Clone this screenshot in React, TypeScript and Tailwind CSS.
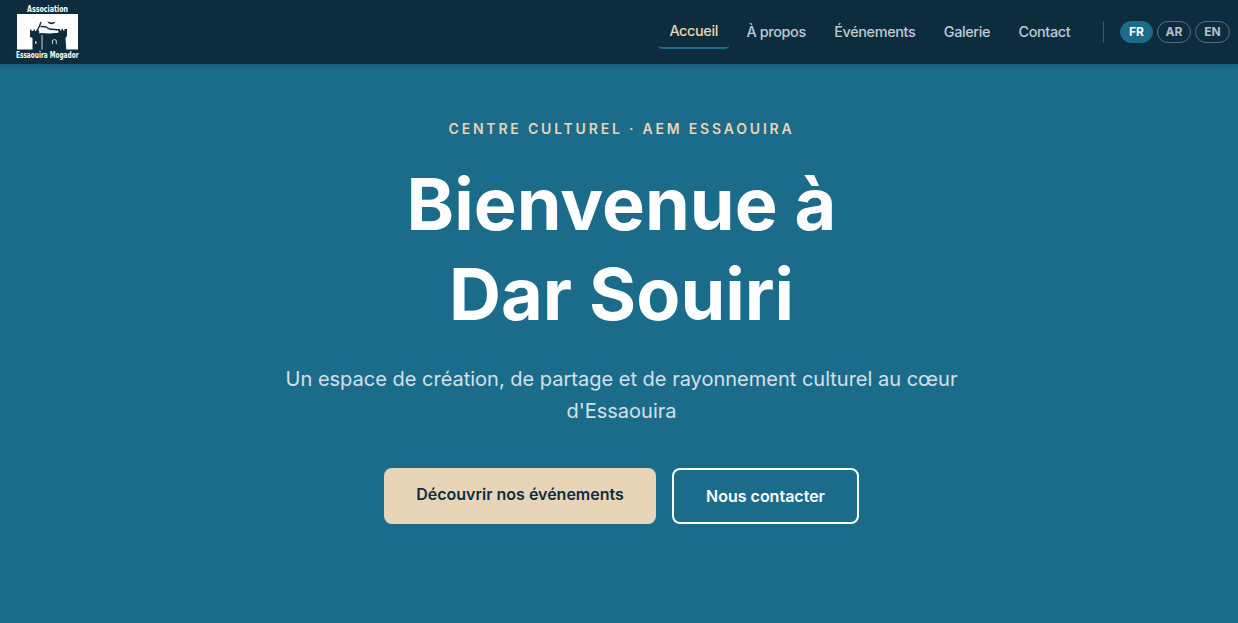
import React from "react";

const links = ["À propos", "Événements", "Galerie", "Contact"];

function Logo() {
  return (
    <svg className="overflow-visible" width="66" height="62" viewBox="0 -1 66 62" role="img" aria-label="Association Essaouira Mogador">
      <rect x="2" y="12" width="61" height="35.500" fill="#fff" />
      <g fill="#0d2d3f">
        <path d="M15 35v-7.500h1.500v1.500h2v-1.500H20V29h1.500v-1.500H23l2 3.500 10 .5 8.500-1V27H45v1.500h1.500V27H48v1.500h1.500V27h2.500v7l-1.500 2 .8 12H17.500V36z" />
      </g>
      <path d="M22 29l2.500-5 1.500-4M25.500 24.500l5 .2 4 2.300 10 1" fill="none" stroke="#0d2d3f" strokeWidth="1.400" />
      <path d="M24 31l8-1.700 11 1.200" fill="none" stroke="#fff" strokeWidth="1.100" />
      <path d="M32.300 19q2 1.500 3.200 1.200l1 .6 1-.6q2 .2 3-1.200q-1 3.200-4 3.200q-3 0-4.200-3.200z" fill="#0d2d3f" />
      <path d="M27 33v14.500M37.500 42v-3.500q2-2 3.800 0V42" fill="none" stroke="#fff" strokeWidth="0.800" />
      <path d="M20 39.500h1.500v2H20z" fill="#fff" />
      <g fill="#fff" fontFamily="DejaVu Sans Condensed, DejaVu Sans, sans-serif" fontWeight="700">
        <text x="12" y="10" fontSize="8" textLength="41" lengthAdjust="spacingAndGlyphs">Association</text>
        <text x="1" y="55.500" fontSize="9.500" textLength="62.500" lengthAdjust="spacingAndGlyphs">Essaouira Mogador</text>
      </g>
    </svg>
  );
}

export default function App() {
  return (
    <div className="flex h-screen flex-col overflow-hidden bg-[#1b6b8a] font-['Inter',sans-serif]">
      <header className="z-10 flex h-16 shrink-0 items-center justify-between bg-[#0d2d3f] pl-[15px] pr-2 shadow-[0_2px_4px_rgba(0,0,0,0.12)]">
        <a href="#" className="block"><Logo /></a>
        <div className="flex items-center">
          <nav className="flex items-center gap-1.5 text-[14.4px] font-medium leading-[23px] tracking-[-0.35px] text-white/75">
            <a href="#" className="rounded-[4px] border-b-2 border-[#1b6b8a] px-[11.2px] pb-[5px] pt-1 text-[#e8d5b7]">Accueil</a>
            {links.map((label) => (
              <a key={label} href="#" className="px-[11.2px] pb-[6px] pt-[5px]">{label}</a>
            ))}
          </nav>
          <div className="ml-[21.5px] flex h-[22px] items-center gap-1 border-l border-white/20 pl-4 text-[12px] font-bold leading-[20px]">
            <button className="h-[22px] w-[33px] rounded-full border border-[#1b6b8a] bg-[#1b6b8a] text-white">FR</button>
            <button className="h-[22px] w-[34px] rounded-full border border-white/30 text-white/70">AR</button>
            <button className="h-[22px] w-[35px] rounded-full border border-white/30 text-white/70">EN</button>
          </div>
        </div>
      </header>
      <main className="flex flex-1 flex-col items-center pl-[5px] pt-[54px] text-center">
        <p className="text-[14px] font-semibold leading-[22px] tracking-[2.8px] text-[#e8d5b7]">CENTRE CULTUREL · AEM ESSAOUIRA</p>
        <h1 className="mt-[19px] text-[72px] font-bold leading-[90px] text-white">Bienvenue à<br />Dar Souiri</h1>
        <p className="mt-[24px] w-[700px] text-[20px] leading-8 text-white/80">Un espace de création, de partage et de rayonnement culturel au cœur d'Essaouira</p>
        <div className="mt-[41px] flex gap-4 text-[16px] font-semibold leading-5">
          <a href="#" className="flex h-14 w-[272px] items-center justify-center rounded-lg bg-[#e8d5b7] pb-1 text-[#0d2d3f]">Découvrir nos événements</a>
          <a href="#" className="flex h-14 w-[187px] items-center justify-center rounded-lg border-2 border-white text-white">Nous contacter</a>
        </div>
      </main>
    </div>
  );
}
